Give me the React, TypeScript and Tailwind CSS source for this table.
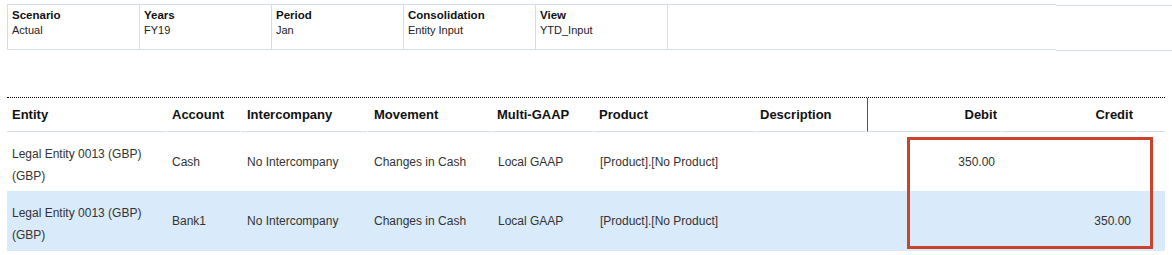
const filters = [
  { label: "Scenario", value: "Actual" },
  { label: "Years", value: "FY19" },
  { label: "Period", value: "Jan" },
  { label: "Consolidation", value: "Entity Input" },
  { label: "View", value: "YTD_Input" },
];

const rows = [
  { entity: "Legal Entity 0013 (GBP) (GBP)", account: "Cash", ic: "No Intercompany", movement: "Changes in Cash", gaap: "Local GAAP", product: "[Product].[No Product]", debit: "350.00", credit: "" },
  { entity: "Legal Entity 0013 (GBP) (GBP)", account: "Bank1", ic: "No Intercompany", movement: "Changes in Cash", gaap: "Local GAAP", product: "[Product].[No Product]", debit: "", credit: "350.00" },
];

const cols = "grid grid-cols-[159px_73px_126px_123px_101px_161px_110px_134px_135px_27px] gap-x-px";

export default function App() {
  return (
    <div className="relative w-[1172px] h-[255px] bg-white font-['Liberation_Sans',Arial,sans-serif] overflow-hidden">
      {/* POV bar */}
      <div className="flex items-start pt-[4px] pl-[7px]">
        {filters.map((f) => (
          <div key={f.label} className="w-[132px] h-[46px] border-y border-l border-[#d5dde6] pl-[4px] pt-[3px]">
            <div className="text-[11.5px] font-bold leading-[15px] text-[#111]">{f.label}</div>
            <div className="text-[11px] leading-[13px] text-[#222] mt-px">{f.value}</div>
          </div>
        ))}
        <div className="w-[389px] h-[46px] border-y border-l border-[#d5dde6]" />
        <div className="w-[116px] h-[46px] mt-px border-y border-[#d5dde6]" />
      </div>

      {/* Journal grid */}
      <div className="mt-[46px] ml-[7px] w-[1158px] border-t border-dotted border-black">
        <div className={`${cols} text-[13px] font-bold text-[#111]`}>
          <div className="h-[34px] border-b border-[#d3dee9] flex items-center pl-[5px]">Entity</div>
          <div className="h-[34px] border-b border-[#d3dee9] flex items-center pl-[5px]">Account</div>
          <div className="h-[34px] border-b border-[#d3dee9] flex items-center pl-[6px]">Intercompany</div>
          <div className="h-[34px] border-b border-[#d3dee9] flex items-center pl-[6px]">Movement</div>
          <div className="h-[34px] border-b border-[#d3dee9] flex items-center pl-[5px]">Multi-GAAP</div>
          <div className="h-[34px] border-b border-[#d3dee9] flex items-center pl-[5px]">Product</div>
          <div className="h-[34px] border-b border-[#d3dee9] flex items-center pl-[4px]">Description</div>
          <div className="h-[34px] border-b border-l border-b-[#d3dee9] border-l-[#8a22d4] flex items-center justify-end pr-[4px]">Debit</div>
          <div className="h-[34px] border-b border-[#d3dee9] flex items-center justify-end pr-[4px]">Credit</div>
          <div className="h-[34px] border-b border-[#d3dee9]" />
        </div>

        {rows.map((r, i) => (
          <div key={i} className={`${cols} text-[12px] leading-[22px] text-[#333] ${i === 1 ? "h-[60px] bg-[#d9eafa]" : "h-[59px]"}`}>
            <div className="flex items-center pl-[5px] pr-[4px] pt-[6px]">{r.entity}</div>
            <div className="flex items-center pl-[5px]">{r.account}</div>
            <div className="flex items-center pl-[6px]">{r.ic}</div>
            <div className="flex items-center pl-[6px]">{r.movement}</div>
            <div className="flex items-center pl-[6px]">{r.gaap}</div>
            <div className="flex items-center pl-[6px]">{r.product}</div>
            <div />
            <div className="flex items-center justify-end pr-[6px]">{r.debit}</div>
            <div className="flex items-center justify-end pr-[6px]">{r.credit}</div>
            <div />
          </div>
        ))}
      </div>

      {/* highlight around amounts */}
      <div className="absolute left-[907px] top-[137px] w-[246px] h-[112px] border-[3px] border-[#c9432f]" />
    </div>
  );
}
